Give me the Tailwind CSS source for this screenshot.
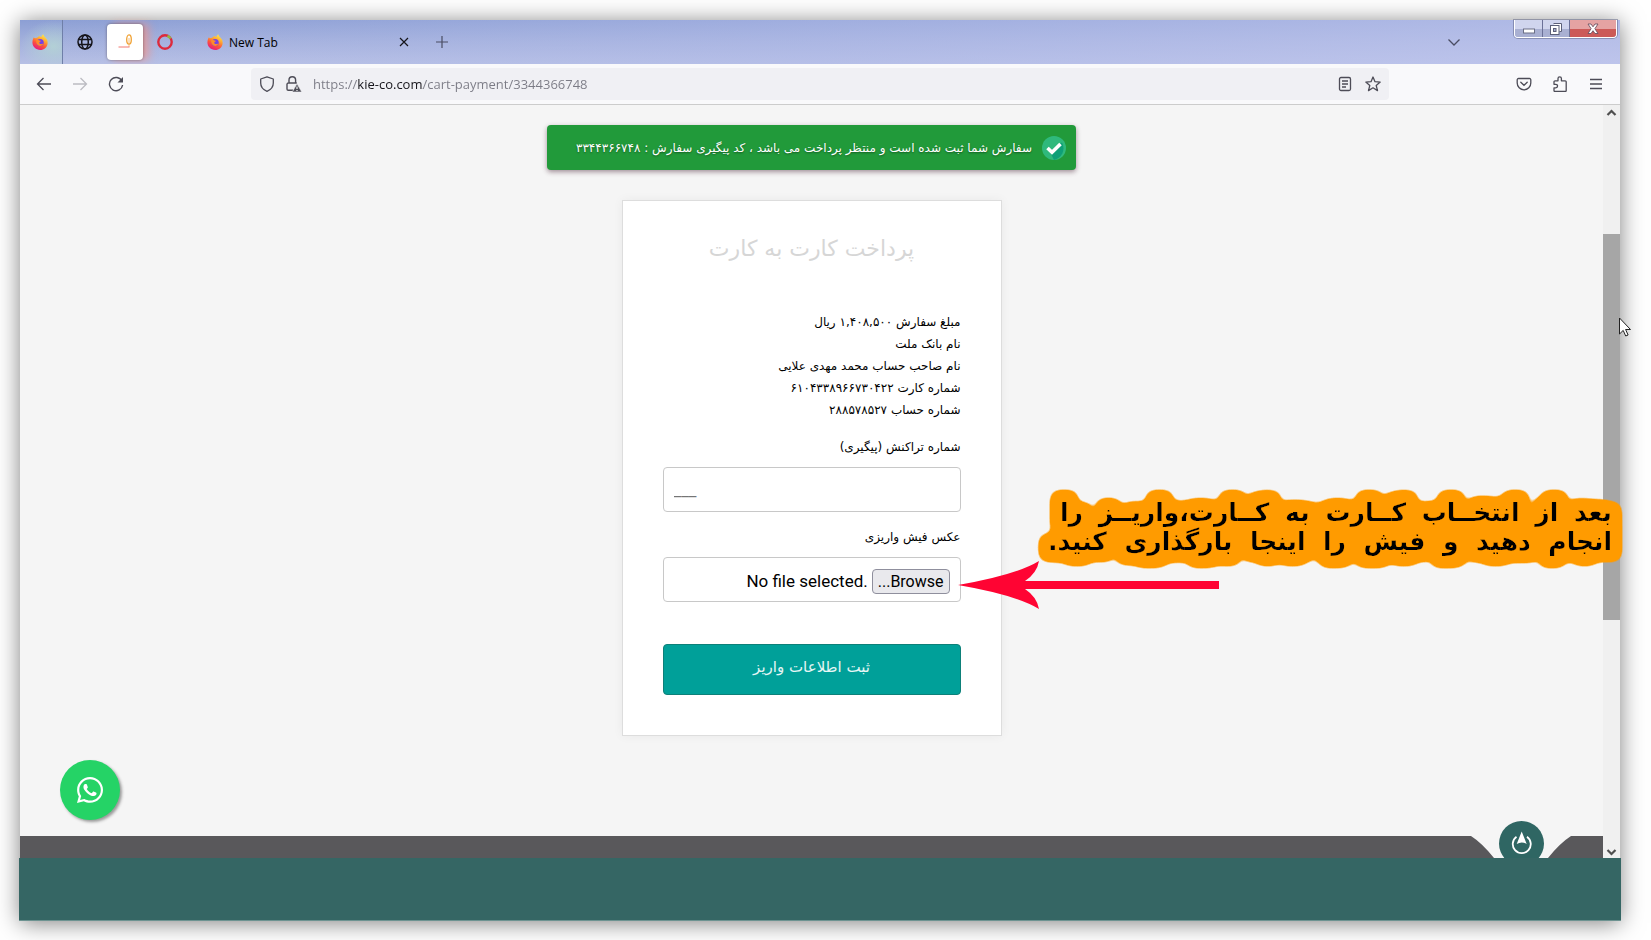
<!DOCTYPE html>
<html lang="fa">

<head>
    <meta charset="UTF-8">
    <meta name="viewport" content="width=device-width, initial-scale=1.0">
    <title>پرداخت کارت به کارت</title>
    <script src="https://cdn.jsdelivr.net/npm/@tailwindcss/browser@4"></script>
</head>

<body class="bg-white font-['Open_Sans',sans-serif]">
    <!-- shared drawings -->
    <svg class="absolute w-0 h-0" aria-hidden="true">
        <defs>
            <linearGradient id="fox-body" x1="0.8" y1="0" x2="0.3" y2="1">
                <stop offset="0" stop-color="#fff44f" />
                <stop offset="0.35" stop-color="#ffa931" />
                <stop offset="0.65" stop-color="#ff5338" />
                <stop offset="1" stop-color="#e31587" />
            </linearGradient>
            <symbol id="firefox" viewBox="0 0 16 16">
                <path fill="url(#fox-body)" d="M1.6 3.4c.5.1 1 .4 1.4.8.6-.4 1.400-.6 2.200-.5C6 2.500 7 2 7.900 1.900c.4.5.7.9 1.300 1.200C9.500 1.900 10.200.9 11.200.200c.3 1.600 1.400 2.500 2.400 3.600.2.2.4.6.5.9.3-.2.5.1.6.4.7 1.300 1.100 2.900.9 4.600C15.200 13.300 12 16 8.200 16 4 16 .5 12.800.4 8.600c0-1.900.4-3.700 1.200-5.200z" />
                <circle cx="8.200" cy="8.600" r="3.500" fill="#7542e5" />
                <path fill="#ff8a2a" d="M4.200 6.100c1.200-.6 2.400-.4 3.200.4.600.2 1.100.1 1.500.3-.1.900-1 1.200-1.500 1.400-.4.900.3 1.900 1.500 1.900 1 0 1.500-.5 2.300-.3-.4 1.300-1.600 2.100-3 2.100-2.400 0-4.400-2-4-5.800z" />
            </symbol>
            <filter id="marker" x="-10%" y="-50%" width="120%" height="200%">
                <feMorphology in="SourceAlpha" operator="dilate" radius="8" />
                <feGaussianBlur stdDeviation="5" />
                <feComponentTransfer result="blob">
                    <feFuncA type="linear" slope="12" intercept="-1.500" />
                </feComponentTransfer>
                <feFlood flood-color="#ff9b00" />
                <feComposite in2="blob" operator="in" />
                <feMerge>
                    <feMergeNode />
                    <feMergeNode in="SourceGraphic" />
                </feMerge>
            </filter>
        </defs>
    </svg>

    <div class="min-h-screen flex flex-col pt-5 pl-5 pr-[31px] pb-[19px] overflow-hidden">
        <div class="relative flex-1 flex flex-col shadow-[0_2px_22px_rgba(0,0,0,0.5)]">

            <!-- tab strip -->
            <header class="h-11 flex items-stretch bg-linear-to-b from-[#8c9fd4] via-[#a4b1dd] to-[#b7c0e5]">
                <div class="flex-1 flex items-stretch bg-linear-to-r from-transparent via-[#b4bdea]/50 to-[#c0c6ee]/70">
                    <button type="button" aria-label="Firefox View" class="w-[43px] pr-[3px] border-r border-[#6f7fa8] flex justify-center items-center bg-radial-[at_80%_60%] from-[#b3d0d6] to-transparent to-70%">
                        <svg class="w-4 h-4"><use href="#firefox" /></svg>
                    </button>
                    <button type="button" aria-label="Pinned tab 1" class="w-11 flex justify-center items-center">
                        <svg class="w-4 h-4" viewBox="0 0 16 16" fill="none" stroke="#15141a" stroke-width="1.500">
                            <circle cx="8" cy="8" r="7" />
                            <ellipse cx="8" cy="8" rx="3.300" ry="7" />
                            <path d="M1.500 5.500h13M1.500 10.500h13" stroke-width="1.300" />
                        </svg>
                    </button>
                    <button type="button" aria-label="Pinned tab 2" class="w-9 my-1 rounded bg-white shadow-[0_0_3px_rgba(0,0,0,0.4),6px_0_8px_rgba(255,140,120,0.6)] flex justify-center items-center">
                        <svg class="w-4 h-4" viewBox="0 0 16 16" fill="none">
                            <ellipse cx="12" cy="5.500" rx="2.300" ry="4.600" stroke="#f0a030" stroke-width="1.300" />
                            <path d="M12 4v9" stroke="#f3b060" stroke-width="0.800" />
                            <path d="M1.500 13h11" stroke="#f27870" />
                        </svg>
                    </button>
                    <button type="button" aria-label="Pinned tab 3" class="w-11 flex justify-center items-center">
                        <svg class="w-4 h-4" viewBox="0 0 16 16" fill="none" stroke-width="2.400">
                            <circle cx="8" cy="8" r="6.700" stroke="#dd2a3c" />
                            <path d="M10.500 1.800l3.200 2.600" stroke="#8fb93e" />
                        </svg>
                    </button>
                    <div class="w-[238px] pl-5 pr-[15px] flex items-center">
                        <svg class="w-4 h-4"><use href="#firefox" /></svg>
                        <span class="ml-[6px] pt-[2px] text-xs text-black">New Tab</span>
                        <button type="button" aria-label="Close tab" class="ml-auto">
                            <svg class="w-3 h-3" viewBox="0 0 12 12" stroke="#15141a" stroke-width="1.200"><path d="M2 2l8 8M10 2l-8 8" /></svg>
                        </button>
                    </div>
                    <button type="button" aria-label="New tab" class="w-[34px] flex justify-center items-center">
                        <svg class="w-3 h-3" viewBox="0 0 12 12" stroke="#4a4d63" stroke-width="1.200"><path d="M6 0v12M0 6h12" /></svg>
                    </button>
                    <button type="button" aria-label="List all tabs" class="ml-auto mr-[53px] flex items-center">
                        <svg class="w-[14px] h-[14px]" viewBox="0 0 14 14" fill="none" stroke="#4a4d63" stroke-width="1.300"><path d="M1.500 4.500L7 10l5.500-5.500" /></svg>
                    </button>
                    <div class="h-[18px] mr-[3px] flex rounded-b border border-t-0 border-white shadow-[0_0_0_1px_rgba(90,95,130,0.5)] overflow-hidden">
                        <button type="button" aria-label="Minimize" class="w-7 border-r border-[#6b7198] bg-linear-to-b from-[#d0d5ee] from-50% to-[#a9b0d2] to-50% flex justify-center items-center">
                            <svg class="w-3 h-3" viewBox="0 0 12 12"><rect x="0.500" y="6" width="11" height="4" fill="#fff" stroke="#6b6f86" /></svg>
                        </button>
                        <button type="button" aria-label="Restore" class="w-[27px] border-r border-[#6b7198] bg-linear-to-b from-[#d0d5ee] from-50% to-[#a9b0d2] to-50% flex justify-center items-center">
                            <svg class="w-3 h-3" viewBox="0 0 12 12" stroke="#5b5f78">
                                <path d="M3.500.500h8v8h-2" fill="#fff" />
                                <rect x="0.500" y="2.500" width="8.500" height="9" fill="#fff" />
                                <rect x="3.500" y="5.500" width="2.500" height="3" fill="#a9b0d2" />
                            </svg>
                        </button>
                        <button type="button" aria-label="Close" class="w-[46px] bg-linear-to-b from-[#e5a3a3] from-50% to-[#cc5a58] to-50% flex justify-center items-center">
                            <svg class="w-3 h-3" viewBox="0 0 12 12"><path d="M1 1h3l2 2.800L8 1h3L7.900 5.700 11 10.500H8L6 7.700 4 10.500H1L4.100 5.700z" fill="#fff" stroke="#6d5060" stroke-width="0.900" /></svg>
                        </button>
                    </div>
                </div>
            </header>

            <!-- toolbar -->
            <nav class="h-[41px] px-[6px] flex items-center bg-[#f9f9fb] border-b border-[#cccccc]">
                <button type="button" aria-label="Back" class="w-9 flex justify-center">
                    <svg class="w-4 h-4" viewBox="0 0 16 16" fill="none" stroke="#4d4c57" stroke-width="1.300"><path d="M15 8H1.800M7.500 2L1.500 8l6 6" /></svg>
                </button>
                <button type="button" aria-label="Forward" class="w-9 flex justify-center">
                    <svg class="w-4 h-4" viewBox="0 0 16 16" fill="none" stroke="#bcbcc2" stroke-width="1.300"><path d="M1 8h13.200M8.500 2l6 6-6 6" /></svg>
                </button>
                <button type="button" aria-label="Reload" class="w-9 flex justify-center">
                    <svg class="w-4 h-4" viewBox="0 0 16 16" fill="none" stroke="#4d4c57" stroke-width="1.400">
                        <path d="M13.900 5A6.600 6.600 0 1 0 14.600 9" />
                        <path d="M15 1v5.500H9.500z" fill="#4d4c57" stroke="none" />
                    </svg>
                </button>
                <div class="flex-1 mx-[117px] h-8 px-2 flex items-center rounded bg-[#f0f0f4]">
                    <svg class="w-4 h-4" viewBox="0 0 16 16" fill="none" stroke="#4d4c57" stroke-width="1.300"><path d="M8 .800L14.300 3v4c0 4-2.500 6.800-6.300 8.300C4.200 13.800 1.700 11 1.700 7V3z" stroke-linejoin="round" /></svg>
                    <svg class="w-4 h-4 ml-[11px]" viewBox="0 0 16 16" fill="none" stroke="#4d4c57" stroke-width="1.400">
                        <path d="M3 7V4a3.300 3.300 0 0 1 6.600 0V7M7 14.300H2.300A1.300 1.300 0 0 1 1 13V8.300A1.300 1.300 0 0 1 2.300 7h8.500" />
                        <path d="M11 7.800l4.800 8.200H6.200z" fill="#4d4c57" stroke="#f0f0f4" stroke-width="0.600" />
                        <path d="M11 10.500v2.500M11 14v1" stroke="#fff" stroke-width="1.100" />
                    </svg>
                    <input type="text" aria-label="Address" value="https://kie-co.com/cart-payment/3344366748" class="flex-1 min-w-0 ml-[11px] pt-[2px] text-[13px] outline-none text-transparent bg-clip-text bg-[linear-gradient(to_right,#7b7b85_44px,#15141a_44px,#15141a_110px,#7b7b85_110px)]">
                    <button type="button" aria-label="Reader view" class="ml-3">
                        <svg class="w-4 h-4" viewBox="0 0 16 16" fill="none" stroke="#4d4c57" stroke-width="1.300"><rect x="2.500" y="1.500" width="11" height="13" rx="1.500" /><path d="M5 5h6M5 8h6M5 11h4" /></svg>
                    </button>
                    <button type="button" aria-label="Bookmark" class="ml-3">
                        <svg class="w-4 h-4" viewBox="0 0 16 16" fill="none" stroke="#4d4c57" stroke-width="1.300" stroke-linejoin="round"><path d="M8 1l2 4.700 5.200.400-4 3.400 1.300 5.100L8 11.800l-4.500 2.800 1.300-5.100-4-3.400L6 5.700z" /></svg>
                    </button>
                </div>
                <button type="button" aria-label="Save to Pocket" class="w-9 flex justify-center">
                    <svg class="w-4 h-4" viewBox="0 0 16 16" fill="none" stroke="#4d4c57" stroke-width="1.300" stroke-linecap="round"><path d="M2.500 2.500h11a1.300 1.300 0 0 1 1.300 1.300V7a6.800 6.800 0 0 1-13.600 0V3.800a1.300 1.300 0 0 1 1.300-1.300zM4.800 6.200L8 9.300l3.200-3.100" /></svg>
                </button>
                <button type="button" aria-label="Extensions" class="w-9 flex justify-center">
                    <svg class="w-4 h-4" viewBox="0 0 16 16" fill="none" stroke="#4d4c57" stroke-width="1.300" stroke-linejoin="round"><path d="M6 4.800V2.500a1.700 1.700 0 0 1 3.400 0v2.300h3.800a1 1 0 0 1 1 1v8.700a1 1 0 0 1-1 1H3a1 1 0 0 1-1-1v-2.700h1.800a1.700 1.700 0 0 0 0-3.500H2V5.800a1 1 0 0 1 1-1z" /></svg>
                </button>
                <button type="button" aria-label="Menu" class="w-9 flex justify-center">
                    <svg class="w-4 h-4" viewBox="0 0 16 16" stroke="#4d4c57" stroke-width="1.300"><path d="M2 3.500h12M2 8h12M2 12.500h12" /></svg>
                </button>
            </nav>

            <div class="flex-1 flex overflow-hidden">
                <!-- page -->
                <div dir="rtl" class="relative flex-1 flex flex-col bg-[#f5f5f5] font-['DejaVu_Sans',sans-serif]">
                    <main class="flex-1 pt-5 pb-[100px]">
                        <div role="status" class="w-[529px] max-w-full h-[45px] mx-auto px-[10px] flex items-center gap-[10px] rounded bg-[#219a3a] shadow-[0_2px_5px_rgba(60,20,40,0.45)] text-white text-xs whitespace-nowrap">
                            <svg class="w-6 h-6 shrink-0" viewBox="0 0 24 24">
                                <circle cx="12" cy="12" r="12" fill="#2fb97c" />
                                <path d="M20 6.500A12 12 0 0 1 12 24L7.500 15z" fill="#0f9f77" />
                                <path d="M5.500 12l4.500 4.300L18.500 8" fill="none" stroke="#fff" stroke-width="3.600" />
                            </svg>
                            <p class="text-shadow-[0_1px_2px_rgba(0,0,0,0.4)]">سفارش شما ثبت شده است و منتظر پرداخت می باشد ، کد پیگیری سفارش : ۳۳۴۴۳۶۶۷۴۸</p>
                        </div>
                        <form class="w-[380px] max-w-full mx-auto mt-[30px] px-10 pt-7 pb-10 bg-white border border-[#dddddd] shadow-[0_0_10px_rgba(0,0,0,0.05)] text-xs text-black">
                            <h1 class="text-[22px] leading-10 text-center text-[#d6d6d6]">پرداخت کارت به کارت</h1>
                            <div class="mt-[42px] leading-[22px]">
                                <p>مبلغ سفارش ۱,۴۰۸,۵۰۰ ریال</p>
                                <p>نام بانک ملت</p>
                                <p>نام صاحب حساب محمد مهدی علایی</p>
                                <p>شماره کارت ۶۱۰۴۳۳۸۹۶۶۷۳۰۴۲۲</p>
                                <p>شماره حساب ۲۸۸۵۷۸۵۲۷</p>
                            </div>
                            <label for="trace" class="block mt-[15px] leading-[22px]">شماره تراکنش (پیگیری)</label>
                            <input id="trace" type="text" dir="ltr" placeholder="___" class="block w-full h-[45px] mt-[9px] px-[10px] rounded border border-[#c8c8c8] font-['Roboto',sans-serif] text-[17px] placeholder:text-[#757575]">
                            <label for="receipt" class="block mt-[14px] leading-[22px]">عکس فیش واریزی</label>
                            <label for="receipt" class="h-[45px] mt-[9px] px-[10px] pt-[3px] flex items-center gap-1 rounded border border-[#c8c8c8] font-['Roboto',sans-serif] text-[17px]">
                                <input id="receipt" type="file" class="sr-only">
                                <span class="h-[25px] px-[5px] leading-[23px] rounded border border-[#8f8f9d] bg-[#e9e9ed] text-base">Browse...</span>
                                <span dir="ltr">No file selected.</span>
                            </label>
                            <button type="submit" class="block w-full h-[51px] mt-[42px] pb-1 rounded border border-[#0d8079] bg-[#00a099] text-white/90 text-[15px]">ثبت اطلاعات واریز</button>
                        </form>
                    </main>
                    <footer class="relative h-[22px] bg-[#59585b]">
                        <svg class="absolute right-[31px] bottom-0 w-[102px] h-[22px]" viewBox="0 0 102 22"><path d="M1 0h100Q90 7 78 22H24Q12 7 1 0z" fill="#f5f5f5" /></svg>
                        <a href="#top" aria-label="بازگشت به بالا" class="absolute right-[59px] -top-[15px]">
                            <svg class="w-[45px] h-[45px]" viewBox="0 0 45 45">
                                <circle cx="22.500" cy="22.500" r="22.500" fill="#2f6663" />
                                <path d="M17.500 15.800a9 9 0 1 0 10.500 0" fill="none" stroke="#fff" stroke-width="1.800" />
                                <path d="M22.700 10.500l5 12.500q-5-3-10 0z" fill="#fff" />
                            </svg>
                        </a>
                    </footer>
                    <a href="#whatsapp" aria-label="WhatsApp" class="absolute left-10 bottom-[38px] w-[60px] h-[60px] rounded-full bg-[#25d366] shadow-[2px_2px_3px_#999999] flex justify-center items-center">
                        <svg class="w-[26px] h-[26px]" viewBox="0 0 448 448" fill="#fff">
                            <path d="M380.900 65.100C339 23.100 283.200 0 223.900 0 101.500 0 1.900 99.600 1.900 222c0 39.100 10.200 77.300 29.600 111L0 448l117.700-30.900c32.400 17.700 68.900 27 106.100 27h.1c122.300 0 224.100-99.600 224.100-222 0-59.300-25.200-115-67.100-157zm-157 341.600c-33.200 0-65.700-8.900-94-25.700l-6.700-4-69.800 18.300L72 327.200l-4.400-7c-18.500-29.400-28.200-63.300-28.200-98.200 0-101.700 82.800-184.500 184.600-184.500 49.300 0 95.600 19.200 130.400 54.100 34.800 34.900 56.200 81.200 56.100 130.500 0 101.800-84.900 184.600-186.600 184.600z" />
                            <path d="M325.100 268.500c-5.500-2.800-32.800-16.200-37.900-18-5.100-1.900-8.800-2.800-12.500 2.800s-14.300 18-17.600 21.800c-3.200 3.700-6.500 4.200-12 1.400-32.600-16.300-54-29.100-75.500-66-5.700-9.800 5.700-9.100 16.300-30.300 1.800-3.700.9-6.900-.5-9.700s-12.500-30.100-17.100-41.200c-4.500-10.800-9.100-9.300-12.500-9.500-3.200-.2-6.900-.2-10.600-.2s-9.700 1.400-14.800 6.900c-5.100 5.600-19.400 19-19.400 46.300s19.900 53.700 22.600 57.400c2.800 3.700 39.100 59.700 94.800 83.800 35.200 15.200 49 16.500 66.600 13.900 10.700-1.600 32.800-13.400 37.400-26.400s4.600-24.100 3.200-26.400c-1.300-2.500-5-3.900-10.500-6.600z" />
                        </svg>
                    </a>
                </div>

                <!-- scrollbar -->
                <div class="w-[17px] flex flex-col items-center bg-[#f0f0f0]">
                    <svg class="w-[17px] h-[17px]" viewBox="0 0 17 17" fill="none" stroke="#505050" stroke-width="2.200"><path d="M4.500 10l4-4 4 4" /></svg>
                    <div class="w-full flex-1 flex flex-col">
                        <div class="flex-[112]"></div>
                        <div class="flex-[386] bg-[#a6a6a6]"></div>
                        <div class="flex-[221]"></div>
                    </div>
                    <svg class="w-[17px] h-[17px]" viewBox="0 0 17 17" fill="none" stroke="#505050" stroke-width="2.200"><path d="M4.500 9l4 4 4-4" /></svg>
                </div>
            </div>

            <div class="h-[63px] -mx-px bg-[#356664] border-b border-[#6d9391]"></div>

            <!-- annotation over the window -->
            <p dir="rtl" class="absolute right-2 top-[478px] w-[564px] font-['DejaVu_Sans',sans-serif] font-bold text-[25px] leading-[29px] text-black whitespace-nowrap [filter:url(#marker)]">
                <span class="block w-[552px] [text-align-last:justify]">بعد از انتخــاب کــارت به کــارت،واریــز را</span>
                <span class="block [text-align-last:justify]">انجام دهید و فیش را اینجا بارگذاری کنید.</span>
            </p>
            <svg class="absolute right-[401px] top-[541px] w-[261px] h-12" viewBox="0 0 261 48"><path d="M0 24Q58 14 81 0 79 12 67 20H261v8H67q12 8 14 20Q58 34 0 24z" fill="#ff0433" /></svg>
            <svg class="absolute -right-[11px] top-[297px] w-3 h-5" viewBox="0 0 12 20"><path d="M.500 1v16l3.700-3.600 2.500 5.600 2.400-1-2.500-5.500H11.500z" fill="#fff" stroke="#222" /></svg>
        </div>
    </div>
</body>

</html>
